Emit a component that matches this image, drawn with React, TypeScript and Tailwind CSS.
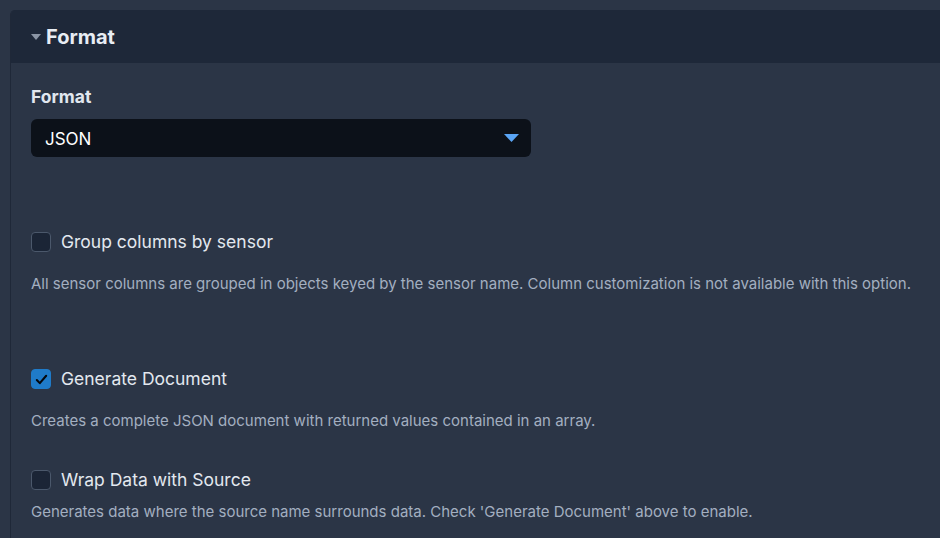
import React, { useState } from 'react';

function Checkbox({ checked, onChange }: { checked: boolean; onChange: () => void }) {
  return (
    <button
      onClick={onChange}
      className={`w-5 h-5 shrink-0 rounded-[4px] flex items-center justify-center border ${
        checked ? 'bg-[#1f7bc9] border-[#1f7bc9]' : 'bg-[#1b2536] border-[#4b586b]'
      }`}
    >
      {checked && (
        <svg viewBox="0 0 16 16" className="w-[15px] h-[15px]">
          <path d="M3 8.5l3.2 3.4L13 4" fill="none" stroke="#05080d" strokeWidth="2.2" strokeLinecap="round" strokeLinejoin="round" />
        </svg>
      )}
    </button>
  );
}

function Option({
  label,
  help,
  checked,
  onToggle,
  className,
  helpClass,
}: {
  label: string;
  help: string;
  checked: boolean;
  onToggle: () => void;
  className: string;
  helpClass: string;
}) {
  return (
    <div className={className}>
      <label className="flex items-center gap-[10px] h-6 cursor-pointer">
        <Checkbox checked={checked} onChange={onToggle} />
        <span className="text-[17.5px] text-[#e3e8ef]">{label}</span>
      </label>
      <p className={`text-[15px] leading-5 text-[#a3afc0] ${helpClass}`}>{help}</p>
    </div>
  );
}

export default function App() {
  const [group, setGroup] = useState(false);
  const [doc, setDoc] = useState(true);
  const [wrap, setWrap] = useState(false);

  return (
    <div className="min-h-screen h-[538px] overflow-hidden bg-[#2b3546] pt-[10px] pl-[10px] font-['Inter',sans-serif]">
      <div className="h-full rounded-tl-[5px] border-l border-[#1f2838] overflow-hidden">
        <div className="h-[53px] bg-[#1e2839] flex items-center pl-5 gap-[5px]">
          <svg viewBox="0 0 10 6" className="w-[10px] h-[6px] mt-[1px]">
            <path d="M0 0h10L5 6z" fill="#8b95a5" />
          </svg>
          <span className="text-xl font-bold text-[#e8edf4]">Format</span>
        </div>

        <div className="pl-5 pt-[22px]">
          <div className="text-[17.5px] leading-6 font-bold text-[#e1e7ef]">Format</div>
          <button className="mt-[10px] w-[500px] h-[38px] rounded-md bg-[#0c1119] flex items-center justify-between pl-[14px] pr-3">
            <span className="text-[17px] text-white pt-[3px]">JSON</span>
            <svg viewBox="0 0 15 8" className="w-[15px] h-2">
              <path d="M0 0h15L7.5 8z" fill="#5aa5f5" />
            </svg>
          </button>

          <Option
            className="mt-[73px]"
            helpClass="mt-5"
            label="Group columns by sensor"
            help="All sensor columns are grouped in objects keyed by the sensor name. Column customization is not available with this option."
            checked={group}
            onToggle={() => setGroup(!group)}
          />
          <Option
            className="mt-[73px]"
            helpClass="mt-5"
            label="Generate Document"
            help="Creates a complete JSON document with returned values contained in an array."
            checked={doc}
            onToggle={() => setDoc(!doc)}
          />
          <Option
            className="mt-[37px]"
            helpClass="mt-[10px]"
            label="Wrap Data with Source"
            help="Generates data where the source name surrounds data. Check 'Generate Document' above to enable."
            checked={wrap}
            onToggle={() => setWrap(!wrap)}
          />
        </div>
      </div>
    </div>
  );
}
